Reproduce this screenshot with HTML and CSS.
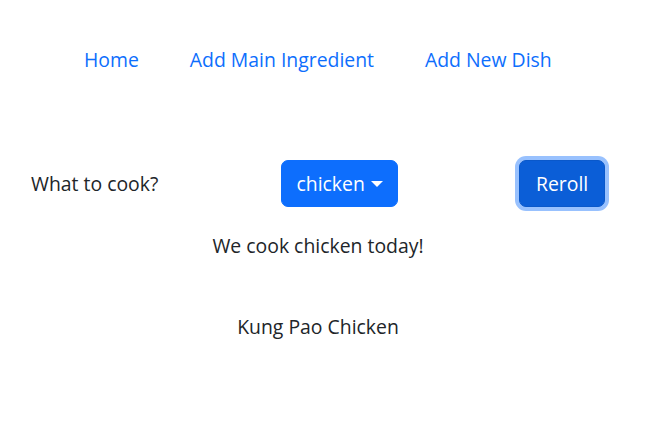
FILE: index.html
```html
<!DOCTYPE html>
<html lang="en">
<head>
<meta charset="utf-8">
<title>What to cook</title>
<link rel="stylesheet" href="styles.css">
</head>
<body>
<nav class="nav">
  <a class="nav-link" href="#">Home</a>
  <a class="nav-link" href="#">Add Main Ingredient</a>
  <a class="nav-link" href="#">Add New Dish</a>
</nav>
<main class="main">
  <div class="picker">
    <span class="label">What to cook?</span>
    <div class="cell"><button class="btn btn-primary dropdown-toggle" type="button">chicken</button></div>
    <div class="cell"><button class="btn btn-reroll" type="button">Reroll</button></div>
  </div>
  <p class="today">We cook chicken today!</p>
  <p class="dish">Kung Pao Chicken</p>
</main>
</body>
</html>
```
FILE: styles.css
```css
html, body {
  margin: 0;
  padding: 0;
  background: #fff;
}
body {
  font-family: "Open Sans", "Noto Sans", sans-serif;
  font-size: 19.4px;
  line-height: 30px;
  color: #212529;
}
.nav {
  display: flex;
  justify-content: flex-start;
  padding: 45px 0 0 84px;
  gap: 51px;
}
.nav-link {
  color: #0d6efd;
  text-decoration: none;
}
.main {
  padding-top: 85px;
}
.picker {
  display: grid;
  grid-template-columns: 250px 238px auto;
  align-items: center;
  padding-left: 31px;
  height: 47px;
}
.cell {
  display: flex;
}
.btn {
  font-family: inherit;
  font-size: 19.4px;
  line-height: 30px;
  padding: 7px 14.5px;
  border-radius: 7px;
  border: 1px solid #0d6efd;
  background: #0d6efd;
  color: #fff;
  height: 47px;
}
.dropdown-toggle::after {
  content: "";
  display: inline-block;
  margin-left: 6px;
  vertical-align: 4px;
  border-top: 6px solid #fff;
  border-left: 6px solid transparent;
  border-right: 6px solid transparent;
}
.btn-reroll {
  background: #0b5ed7;
  border-color: #0a58ca;
  box-shadow: 0 0 0 4px #98c1fe;
  padding: 7px 16px;
}
.today {
  margin: 24px 0 0;
  text-align: center;
  padding-right: 35px;
}
.dish {
  margin: 51px 0 0;
  text-align: center;
  padding-right: 35px;
}
```
